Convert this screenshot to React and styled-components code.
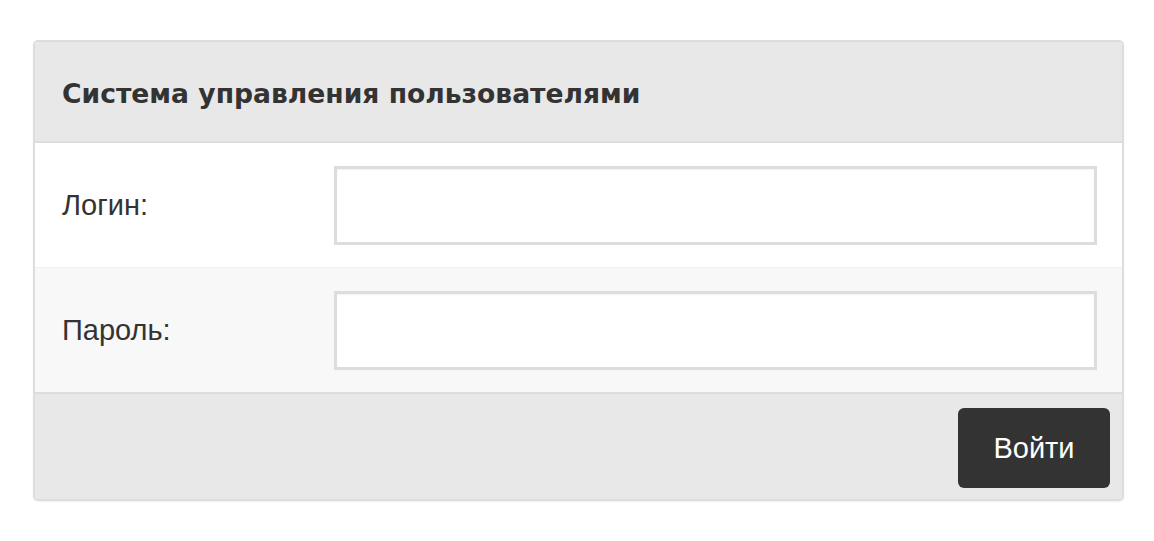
import React from "react";
import styled, { createGlobalStyle } from "styled-components";

const GlobalStyle = createGlobalStyle`
  html, body {
    margin: 0;
    padding: 0;
    background: #ffffff;
  }
  body {
    font-family: "Liberation Sans", Arial, sans-serif;
    color: #333333;
  }
`;

const Page = styled.div`
  padding: 40px 30px 40px 33px;
`;

const Panel = styled.form`
  border: 2px solid #dddddd;
  border-radius: 5px;
  overflow: hidden;
  background: #ffffff;
  box-shadow: 0 1px 2px rgba(0, 0, 0, 0.06);
`;

const Header = styled.div`
  box-sizing: border-box;
  background: #e8e8e8;
  border-bottom: 2px solid #dddddd;
  padding: 3px 27px 0 27px;
  height: 101px;
  display: flex;
  align-items: center;
`;

const Title = styled.h1`
  margin: 0;
  font-family: "DejaVu Sans", Verdana, sans-serif;
  font-weight: bold;
  font-size: 26.6px;
  color: #333333;
`;

const Row = styled.div`
  display: grid;
  grid-template-columns: 272px 1fr;
  align-items: center;
  padding: 23px 25px 22px 27px;
  background: ${(p) => (p.striped ? "#f8f8f8" : "#ffffff")};
  border-top: ${(p) => (p.striped ? "1px solid #f0f0f0" : "none")};
`;

const Label = styled.label`
  font-size: 29px;
  color: #333333;
`;

const Input = styled.input`
  box-sizing: border-box;
  width: 100%;
  height: 79px;
  border: 3px solid #dddddd;
  background: #ffffff;
  box-shadow: inset 0 1px 2px rgba(0, 0, 0, 0.05);
  font-size: 26px;
  padding: 0 12px;
  outline: none;
`;

const Footer = styled.div`
  background: #e8e8e8;
  border-top: 2px solid #dddddd;
  padding: 14px 12px 11px 0;
  display: flex;
  justify-content: flex-end;
`;

const Button = styled.button`
  width: 152px;
  height: 80px;
  border: none;
  border-radius: 6px;
  background: #333333;
  color: #ffffff;
  font-family: "Liberation Sans", Arial, sans-serif;
  font-size: 29px;
  cursor: pointer;
`;

export default function App() {
  return (
    <>
      <GlobalStyle />
      <Page>
        <Panel onSubmit={(e) => e.preventDefault()}>
          <Header>
            <Title>Система управления пользователями</Title>
          </Header>
          <Row>
            <Label htmlFor="login">Логин:</Label>
            <Input id="login" type="text" />
          </Row>
          <Row striped>
            <Label htmlFor="password">Пароль:</Label>
            <Input id="password" type="password" />
          </Row>
          <Footer>
            <Button type="submit">Войти</Button>
          </Footer>
        </Panel>
      </Page>
    </>
  );
}
